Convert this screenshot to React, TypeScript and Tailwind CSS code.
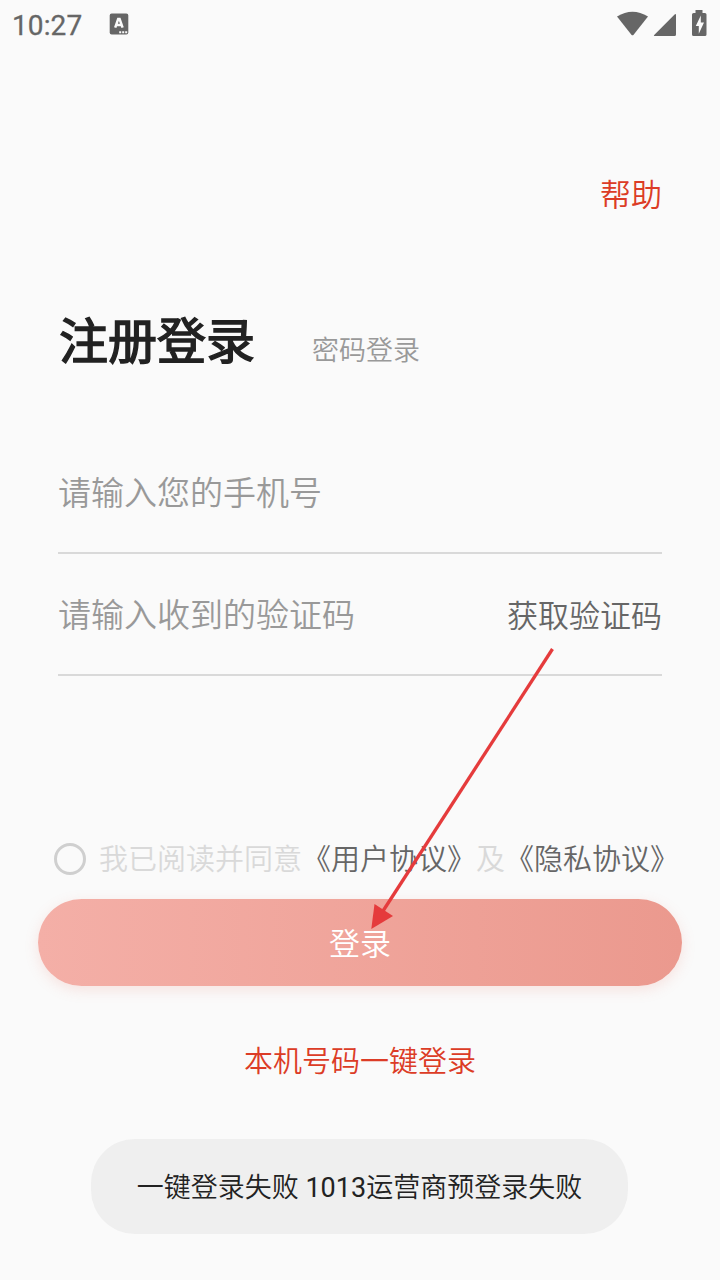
import React, { useState } from "react";

const StatusBar: React.FC = () => (
  <header className="flex h-[50px] items-center justify-between pl-3 pr-[13px] font-normal text-[#666666]">
    <div className="flex items-center">
      <span className="w-[97px] pt-0.5 text-[28px] leading-12 tracking-[0.1px] [-webkit-text-stroke:0.3px_#666666]">
        10:27
      </span>
      <svg width="20" height="22" viewBox="0 0 20 22" className="-mt-0.5">
        <rect x="0.7" y="0.5" width="18.6" height="21" rx="2" fill="#666666" />
        <path
          d="M6.200 14.600 9.200 6h1.400l3 8.600M7.500 12h5"
          fill="none"
          stroke="#fafafa"
          strokeWidth="2.500"
        />
        <path d="M10.2 18.2h2v2h-2zM13.2 18.2h2v2h-2zM16.2 18.2h2v2h-2z" fill="#fafafa" />
      </svg>
    </div>
    <svg width="91" height="28" viewBox="0 0 91 28" fill="#666666" className="-mt-0.5">
      <path d="M1 6.5Q16.500-3 32 6.500L17.600 24.700Q16.500 26 15.400 24.700Z" />
      <path d="M58.600 4.500Q60 3.200 60 5V24.500Q60 26 58.500 26H38.500Q37.200 26 38.200 25Z" />
      <path d="M79.500 0h7v3h2.400q1.600 0 1.600 1.600v19.800q0 1.600-1.600 1.600H77.600q-1.600 0-1.600-1.600V4.600Q76 3 77.600 3H79.500z" />
      <path d="M84.800 5.500 79.800 16h3v7.800L88 12.600h-3.200z" fill="#fafafa" />
    </svg>
  </header>
);

// Pointer from the "get code" button to the login button
const GuideArrow: React.FC = () => (
  <svg
    className="pointer-events-none absolute left-0 top-0"
    width="720"
    height="1280"
    viewBox="0 0 720 1280"
  >
    <path d="M552.500 649 383 911" stroke="#e53b3c" strokeWidth="3.300" fill="none" />
    <path d="M371.300 929 374.500 904 393 916Z" fill="#e53b3c" />
  </svg>
);

const App: React.FC = () => {
  const [phone, setPhone] = useState("");
  const [code, setCode] = useState("");
  const [agreed, setAgreed] = useState(false);

  return (
    <div className="relative flex h-[1280px] w-[720px] flex-col overflow-hidden bg-[#fafafa] font-[Roboto,'Noto_Sans_CJK_SC',sans-serif] font-[350]">
      <StatusBar />

      <div className="mt-[122px] flex justify-end px-[58px]">
        <button className="text-[31px] leading-12 text-[#dc3c26]">帮助</button>
      </div>

      <div className="mt-[89px] flex h-[68px] items-start gap-[57px] pl-[59px]">
        <h1 className="text-[49px] font-normal leading-[68px] text-[#222222] [-webkit-text-stroke:1.5px_#222222]">
          注册登录
        </h1>
        <button className="mt-[22px] text-[27px] leading-10 text-[#999999]">密码登录</button>
      </div>

      <form className="mt-[55px] flex flex-col px-[58px]" onSubmit={(e) => e.preventDefault()}>
        <div className="flex h-[122px] items-center border-b-2 border-[#d9d9d9] pt-0.5">
          <input
            type="tel"
            value={phone}
            onChange={(e) => setPhone(e.target.value)}
            placeholder="请输入您的手机号"
            className="h-16 w-full text-[33px] outline-none placeholder:text-[#999999]"
          />
        </div>
        <div className="flex h-[122px] items-center border-b-2 border-[#d9d9d9] pt-0.5">
          <input
            type="text"
            value={code}
            onChange={(e) => setCode(e.target.value)}
            placeholder="请输入收到的验证码"
            className="h-16 min-w-0 flex-1 text-[33px] outline-none placeholder:text-[#999999]"
          />
          <button type="button" className="pt-1 text-[31px] leading-12 text-[#666666]">
            获取验证码
          </button>
        </div>
      </form>

      <div className="mt-[159px] flex h-12 items-center whitespace-nowrap pl-[54px] text-[29px] leading-12">
        <button
          onClick={() => setAgreed(!agreed)}
          className={
            agreed
              ? "mr-[13px] size-8 shrink-0 rounded-full border-3 border-[#dc3c26] bg-[#dc3c26]"
              : "mr-[13px] size-8 shrink-0 rounded-full border-3 border-[#cfcfcf]"
          }
        />
        <p className="pt-0.5 text-[#d9d9d9]">
          我已阅读并同意<a className="text-[#666666]">《用户协议》</a>及
          <a className="text-[#666666]">《隐私协议》</a>
        </p>
      </div>

      <button className="mx-[38px] mt-4 h-[87px] rounded-full bg-linear-to-r from-[#f4afa7] to-[#eb998e] pt-1.5 text-[31px] text-white shadow-[0_4px_14px_rgba(235,120,105,0.18)]">
        登录
      </button>

      <button className="mx-auto mt-[52px] text-[29px] leading-12 text-[#dc3c26]">
        本机号码一键登录
      </button>

      <div className="ml-[91px] mt-[53px] flex h-[95px] w-[537px] items-center justify-center rounded-[44px] bg-[#efefef] pt-1 text-[27px] text-[#222222]">
        <p>
          一键登录失败 <span className="font-normal">1013</span>运营商预登录失败
        </p>
      </div>

      <GuideArrow />
    </div>
  );
};

export default App;
